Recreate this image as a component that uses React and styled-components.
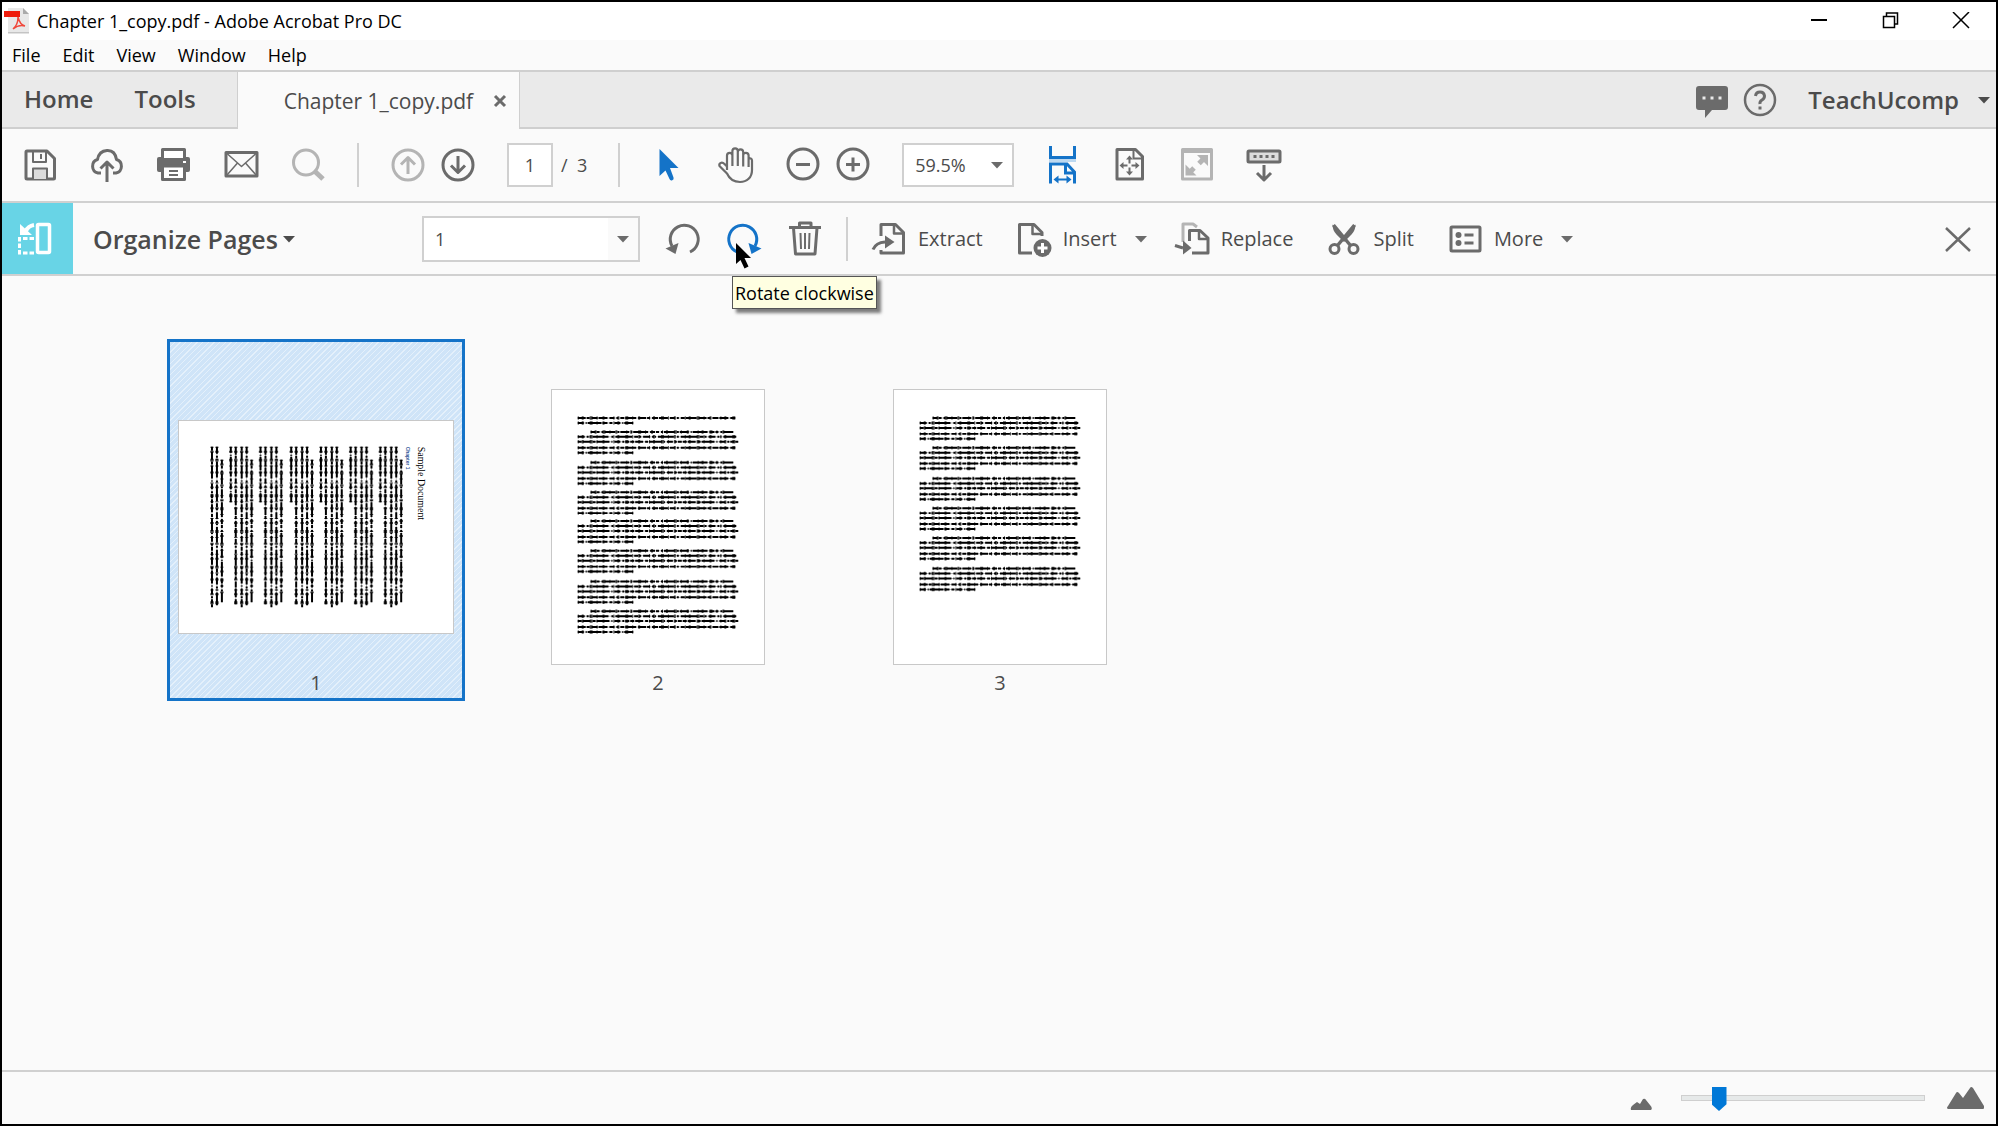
import React, { useState } from "react";
import styled, { createGlobalStyle, css } from "styled-components";

const GlobalStyle = createGlobalStyle`
  * {
    box-sizing: border-box;
  }
  body {
    margin: 0;
    background: #fafafa;
    font-family: "Open Sans", "Noto Sans", sans-serif;
    color: #4b4b4b;
  }
  button,
  input,
  select {
    font-family: inherit;
    color: inherit;
    margin: 0;
  }
  button {
    border: 0;
    padding: 0;
    background: none;
  }
`;

const WindowStyled = styled.div`
  display: flex;
  flex-direction: column;
  min-height: 100vh;
  border: 2px solid #000;
  background: #fafafa;
`;

const TitleBar = styled.header`
  display: flex;
  align-items: center;
  height: 38px;
  padding-left: 2px;
  background: #fff;
  color: #000;
  > h1 {
    flex: 1;
    margin: 0 0 0 7px;
    font-size: 18px;
    font-weight: 400;
    line-height: 24px;
  }
`;

const WindowButton = styled.button`
  display: grid;
  place-items: center;
  width: 71px;
  height: 36px;
`;

const MenuBar = styled.nav`
  display: flex;
  gap: 22px;
  height: 32px;
  padding: 0 10px;
  border-bottom: 2px solid #cfcfcf;
  > button {
    color: #000;
    font-size: 18px;
    line-height: 24px;
  }
`;

const TabBar = styled.div`
  display: flex;
  height: 57px;
  background: #eaeaea;
`;

const barLine = css`
  border-bottom: 2px solid #cfcfcf;
`;

const MainTabs = styled.nav`
  display: flex;
  gap: 41px;
  padding: 0 41px 1px 22px;
  ${barLine}
`;

const BigButton = styled.button`
  display: flex;
  align-items: center;
  gap: ${({ gap }) => gap || "5px"};
  font-size: ${({ size }) => size || "24px"};
  font-weight: 600;
  line-height: 32px;
`;

const FileTab = styled.div`
  display: flex;
  align-items: center;
  gap: 20px;
  padding: 0 12px 0 46px;
  border: solid #cfcfcf;
  border-width: 0 1px;
  background: #fafafa;
  font-size: 21px;
  line-height: 28px;
  > button {
    display: grid;
  }
`;

const Account = styled.div`
  display: flex;
  flex: 1;
  justify-content: flex-end;
  align-items: center;
  gap: 12px;
  padding-right: 6px;
  ${barLine}
  > ${BigButton} {
    margin-left: 18px;
  }
`;

const Toolbar = styled.div`
  display: flex;
  align-items: center;
  gap: 31px;
  height: 74px;
  padding-left: 20px;
  border-bottom: 2px solid #d0d0d0;
`;

const Pair = styled.div`
  display: flex;
  align-items: center;
  gap: ${({ gap }) => gap || "14px"};
`;

const IconButton = styled.button`
  position: relative;
  display: grid;
  color: ${({ tone }) =>
    tone === "active" ? "#1473c8" : tone === "off" ? "#b4b4b4" : "#6b6b6b"};
`;

const Divider = styled.div`
  width: 2px;
  height: 44px;
  background: #d0d0d0;
`;

const PageInput = styled.input`
  width: 46px;
  height: 44px;
  border: 2px solid #d0d0d0;
  background: #fff;
  font-size: 18px;
  text-align: center;
`;

const PageCount = styled.span`
  font-size: 18px;
  line-height: 24px;
  white-space: pre;
`;

const SelectBox = styled.div`
  display: grid;
  align-items: center;
  width: ${({ width }) => width};
  height: ${({ height }) => height};
  border: 2px solid #d0d0d0;
  background: #fff;
  > * {
    grid-area: 1 / 1;
  }
  > select {
    width: 100%;
    height: 100%;
    padding: 0 11px;
    border: 0;
    appearance: none;
    background: none;
    font-size: 18px;
  }
`;

const SelectArrow = styled.span`
  display: grid;
  place-items: center;
  justify-self: end;
  width: 30px;
  height: 100%;
  background: ${({ shaded }) => (shaded ? "#fafafa" : "none")};
  pointer-events: none;
`;

const OrganizeBar = styled.div`
  display: flex;
  align-items: center;
  gap: 25px;
  height: 73px;
  padding-right: 20px;
  border-bottom: 2px solid #d0d0d0;
  > ${Divider} {
    margin: 0 -2px;
  }
`;

const ToolBadge = styled.div`
  display: grid;
  place-items: center;
  align-self: stretch;
  width: 71px;
  padding-right: 5px;
  background: #68d4e6;
`;

const ToolName = styled.div`
  display: flex;
  width: 304px;
  margin-left: -5px;
`;

const Actions = styled.div`
  display: flex;
  flex: 1;
  align-items: center;
  gap: 33px;
`;

const ActionButton = styled.button`
  display: flex;
  align-items: center;
  gap: 11px;
  color: #6b6b6b;
  font-size: 20px;
  line-height: 28px;
  > span {
    padding-top: 1px;
    color: #4b4b4b;
  }
  > span + svg {
    margin: 0 -6px 0 7px;
  }
`;

const MousePointer = styled.svg`
  position: absolute;
  top: 22px;
  left: 10px;
  z-index: 2;
`;

const Tooltip = styled.span`
  position: absolute;
  top: 55px;
  left: 6px;
  z-index: 1;
  padding: 4px 2px 2px;
  border: 1px solid #555;
  background: #ffffe1;
  box-shadow: 4px 4px 3px rgba(0, 0, 0, 0.5);
  color: #000;
  font-size: 18px;
  line-height: 25px;
  white-space: nowrap;
`;

const Pages = styled.main`
  display: flex;
  flex: 1;
  flex-wrap: wrap;
  align-content: flex-start;
  gap: 44px;
  padding: 63px 165px;
`;

const PageCell = styled.figure`
  width: 298px;
  margin: 0;
  padding-top: 47px;
  border: 3px solid ${({ selected }) => (selected ? "#1473c8" : "transparent")};
  background: ${({ selected }) =>
    selected
      ? "repeating-linear-gradient(135deg, #cfe4f8 0 3px, #e4f0fb 3px 4px)"
      : "none"};
  > figcaption {
    padding-top: 3px;
    font-size: 20px;
    line-height: 30px;
    text-align: center;
  }
`;

const PageArea = styled.div`
  display: grid;
  place-items: center;
  height: 276px;
`;

const Sheet = styled.svg`
  display: block;
  border: 1px solid #c8c8c8;
  background: #fff;
`;

const Footer = styled.footer`
  display: flex;
  justify-content: flex-end;
  align-items: center;
  height: 54px;
  padding-right: 12px;
  border-top: 2px solid #d0d0d0;
`;

const SizeSlider = styled.input`
  width: 244px;
  height: 24px;
  margin: 0 22px 0 29px;
  appearance: none;
  background: none;
  &::-webkit-slider-runnable-track {
    height: 6px;
    border: 1px solid #cfcfcf;
    background: #e6e9e9;
  }
  &::-webkit-slider-thumb {
    appearance: none;
    width: 15px;
    height: 24px;
    margin-top: -9px;
    background: #0078d7;
    clip-path: polygon(0 0, 100% 0, 100% 72%, 50% 100%, 0 72%);
  }
`;

const Icon = ({ children }) => (
  <svg
    width="36"
    height="36"
    viewBox="0 0 36 36"
    fill="none"
    stroke="currentColor"
    strokeWidth="3"
    strokeLinejoin="round"
    overflow="visible"
  >
    {children}
  </svg>
);

const Caret = ({ dark }) => (
  <svg width="12" height="8" viewBox="0 0 12 8" fill={dark ? "#4b4b4b" : "#6b6b6b"}>
    <path d="M0 1h12L6 7.5z" />
  </svg>
);

const icons = {
  save: (
    <>
      <path d="M4 5a1 1 0 0 1 1-1h20l7.5 7.5V31a1 1 0 0 1-1 1H5a1 1 0 0 1-1-1z" />
      <path d="M11 4v11h13V4M19 7v5" strokeWidth="2" />
      <path d="M11 32V21.500h14V32" fill="#ddd" strokeWidth="2" />
    </>
  ),
  cloud: (
    <>
      <path d="M12 26H9a7 7 0 0 1-.5-13.500Q10 4 18 3.500T27.500 12.500A7 7 0 0 1 27 26h-3" />
      <path d="M18 35V15M11.500 21.500L18 15l6.500 6.500" />
    </>
  ),
  print: (
    <>
      <path d="M3 10h29a2 2 0 0 1 2 2v11a2 2 0 0 1-2 2H3a2 2 0 0 1-2-2V12a2 2 0 0 1 2-2z" fill="currentColor" stroke="none" />
      <path d="M6.500 11V2.500h22V11" fill="#fff" />
      <path d="M6.500 19v13.500h22V19z" fill="#fff" />
      <path d="M13 24h9M13 28h9" strokeWidth="2" />
      <path d="M27 15h3" stroke="#fff" strokeWidth="2" />
    </>
  ),
  mail: (
    <>
      <path d="M3 5.500h31v23.500H3z" />
      <path d="M4 6.500l14.500 13L33 6.500M4 28l10.500-12M33 28L22.500 16" strokeWidth="1.500" />
    </>
  ),
  search: (
    <>
      <circle cx="16" cy="15.500" r="12.500" />
      <path d="M25 24.500l8 7.500" strokeWidth="5" />
    </>
  ),
  up: (
    <>
      <circle cx="18" cy="18" r="15" />
      <path d="M18 27V11M11 17.500l7-7 7 7" />
    </>
  ),
  down: (
    <>
      <circle cx="18" cy="18" r="15" />
      <path d="M18 9v16M11 18.500l7 7 7-7" />
    </>
  ),
  select: (
    <path d="M8.500 2V29l6-5.500 4 8.500a2 2 0 0 0 4-1.500l-3.500-9.500h8.500z" fill="currentColor" stroke="none" />
  ),
  hand: (
    <path
      d="M9 23V8.500a2.700 2.700 0 0 1 5.400 0V19M14.400 9V4a2.700 2.700 0 0 1 5.400 0V19M19.800 5a2.700 2.700 0 0 1 5.400 0V19.500M25.200 8.500a2.700 2.700 0 0 1 5.400 0V20M30.600 12a2 2 0 0 1 3.400 1.500V23c0 7.500-5 12-12 12-6.500 0-10.500-3-13-8.500L1.500 19c-1-3 2.500-4.500 5-2L9 19.500"
      strokeWidth="2.200"
    />
  ),
  minus: (
    <>
      <circle cx="18" cy="17" r="15" />
      <path d="M11 17.500h14" />
    </>
  ),
  plus: (
    <>
      <circle cx="18" cy="17" r="15" />
      <path d="M11 17.500h14M18 10.500v14" />
    </>
  ),
  fitWidth: (
    <g strokeLinejoin="miter">
      <path d="M5.500-1v11.500h24V-1" />
      <path d="M4 13.500h27" stroke="#bcd8f0" />
      <path d="M5.500 36.500V17h16.500l7.500 8v11.500M20.500 17v9h9" />
      <path d="M11 32.500h13" strokeWidth="2" />
      <path d="M13.500 28.500v8l-5-4zM21.500 28.500v8l5-4z" fill="currentColor" stroke="none" />
    </g>
  ),
  fitPage: (
    <>
      <path d="M5 2.500h18.500l7 7V32H5z" />
      <path d="M21.500 3v8.500H30" strokeWidth="2" />
      <path d="M17.500 11.500v5M17.500 20.500v5M10.500 18.500h5M19.500 18.500h5" strokeWidth="2" />
      <path d="M14 12.500h7l-3.500-4zM14 24.500h7l-3.500 4zM11.500 15v7l-4-3.500zM23.500 15v7l4-3.500z" fill="currentColor" stroke="none" />
    </>
  ),
  fullscreen: (
    <>
      <path d="M3.500 2.500h29V32h-29z" />
      <path d="M4 5h28" strokeWidth="2" />
      <path d="M20 16.500l5-5M15 21l-5 5" strokeWidth="5" />
      <path d="M18 8h11v11zM6.500 17.500v11h11z" fill="currentColor" stroke="none" />
    </>
  ),
  keyboard: (
    <>
      <rect x="2" y="4" width="32" height="11" rx="1" fill="#ddd" />
      <path d="M7.500 9.500h21" strokeDasharray="3 3" />
      <path d="M18 18v15M11 26l7 7 7-7" />
    </>
  ),
  rotateLeft: (
    <>
      <path d="M25 31A14 14 0 1 0 7 25" />
      <path d="M.500 27.500L13.500 22l-3 11z" fill="currentColor" stroke="none" />
    </>
  ),
  rotateRight: (
    <>
      <path d="M11 31A14 14 0 1 1 29 25" />
      <path d="M35.500 27.500L22.500 22l3 11z" fill="currentColor" stroke="none" />
    </>
  ),
  trash: (
    <>
      <path d="M2 6.500h32M12.500 6V2h11.500v4M6.500 7l2 26h19.500l2-26" />
      <path d="M13.500 12l.500 16M18 12v16M22.500 12l-.500 16" strokeWidth="2" />
    </>
  ),
  extract: (
    <>
      <path d="M10 15V3.500h14.500l8 8V32H10v-3" />
      <path d="M23 4v8.500h9" strokeWidth="2.500" />
      <path d="M2 28.500q3-7 12-7.500" />
      <path d="M14 14.500l9.500 6.500-9.500 6.500z" fill="currentColor" stroke="none" />
    </>
  ),
  insert: (
    <>
      <path d="M16 32H3.500V3.500H18l8 8V15" />
      <path d="M16.500 4v9H26" strokeWidth="2.500" />
      <circle cx="26.500" cy="27" r="9" fill="currentColor" stroke="none" />
      <path d="M21.500 27h10M26.500 22v10" stroke="#fff" />
    </>
  ),
  replace: (
    <>
      <path d="M9 21V3h10l4 3" stroke="#b4b4b4" />
      <path d="M15.500 20V9.500H26l8 7.500v15H18" />
      <path d="M25 10v8h9" strokeWidth="2.500" />
      <path d="M1 24.500l8 2.500" />
      <path d="M9 19.500l8.500 7.500-8.500 6.500z" fill="currentColor" stroke="none" />
    </>
  ),
  split: (
    <>
      <circle cx="8.500" cy="28" r="4.500" />
      <circle cx="27.500" cy="28" r="4.500" />
      <path d="M6.500 3.500q0 6 4 10L18 21l7.500-7.500q4-4 4-10L18 15z" fill="currentColor" stroke="none" />
      <path d="M7.500 4L24.500 24.500M28.500 4L11.500 24.500" strokeWidth="3.500" />
    </>
  ),
  more: (
    <>
      <rect x="4" y="6" width="29" height="24" rx="1" />
      <circle cx="11.500" cy="14" r="3" fill="currentColor" stroke="none" />
      <circle cx="11.500" cy="22" r="3" fill="currentColor" stroke="none" />
      <path d="M17.500 14h9M17.500 22h9" />
    </>
  ),
  close: <path d="M6 7l24 23M30 7L6 30" strokeWidth="2.500" />,
  comment: (
    <>
      <path d="M5 4h26a3 3 0 0 1 3 3v18a3 3 0 0 1-3 3H18l-7 8v-8H5a3 3 0 0 1-3-3V7a3 3 0 0 1 3-3z" fill="currentColor" stroke="none" />
      <path d="M8.500 16h3M16.500 16h3M24.500 16h3" stroke="#eaeaea" />
    </>
  ),
  help: (
    <>
      <circle cx="18" cy="18" r="15" strokeWidth="2.500" />
      <path d="M13.500 14q.500-4 4.500-4t4.500 4q0 2.500-2.500 4t-2 4" />
      <path d="M16.500 26h3" />
    </>
  ),
};

const Tool = ({ name, label, tone, children }) => (
  <IconButton type="button" aria-label={label} tone={tone}>
    <Icon>{icons[name]}</Icon>
    {children}
  </IconButton>
);

// greeked text: start, end and word pattern of each line in a paragraph
const lines = [
  [39, 183, "5 1 3 2 2 1 11 2 2 1 9 2 1 1 15 2"],
  [26, 186, "7 2 2 1 1 2 16 3 2 2 17 2 4 1 2 2"],
  [26, 188, "4 1 8 2 3 1 13 2 1 2 6 2 2 1 4 1"],
  [26, 185, "8 1 3 2 6 1 9 2 5 2 2 2 4 1 11 2"],
  [26, 82, "6 2 1 1 14 1 5 2 3 2"],
];
const offsets = [0, 5, 10, 16, 21];

const Paragraph = ({ y, from = 0, to = 5 }) => (
  <g stroke="#000">
    {lines.slice(from, to).map(([start, end, words], i) => (
      <React.Fragment key={start + words}>
        <path
          d={`M${start} ${y + offsets[i]}H${end}`}
          strokeWidth="2"
          strokeDasharray={words}
        />
        <path
          d={`M${start} ${y + offsets[i]}H${end}`}
          strokeWidth="3.500"
          strokeDasharray="1 3 2 6 3 4 1 5 2 9"
          strokeOpacity="0.700"
        />
        <path
          d={`M${start} ${y + offsets[i]}H${end}`}
          strokeWidth="1"
          strokeOpacity="0.300"
        />
      </React.Fragment>
    ))}
  </g>
);

const PageText = ({ page }) => {
  if (page === 1) {
    return (
      <g transform="translate(276 0) rotate(90)">
        <text x="26" y="35" fontFamily="Liberation Serif, serif" fontSize="10" fill="#000">
          Sample Document
        </text>
        <text x="26" y="47" fontFamily="Liberation Sans, sans-serif" fontSize="5" fontWeight="700" fill="#2f5496">
          Chapter 1
        </text>
        {[52, 82, 112, 142, 173, 203].map((y) => (
          <Paragraph key={y} y={y} />
        ))}
        <Paragraph y={233} to={3} />
      </g>
    );
  }
  if (page === 2) {
    return (
      <>
        <Paragraph y={28} from={3} />
        {[42, 73, 103, 132, 162, 193, 223].map((y) => (
          <Paragraph key={y} y={y} />
        ))}
      </>
    );
  }
  return [28, 58, 89, 119, 149, 180].map((y) => <Paragraph key={y} y={y} />);
};

const Thumbnail = ({ page, rotated, selected }) => {
  const width = rotated ? 276 : 214;
  const height = rotated ? 214 : 276;
  return (
    <PageCell selected={selected}>
      <PageArea>
        <Sheet width={width} height={height} viewBox={`0 0 ${width} ${height}`}>
          <PageText page={page} />
        </Sheet>
      </PageArea>
      <figcaption>{page}</figcaption>
    </PageCell>
  );
};

const App = () => {
  const [size, setSize] = useState(13);
  const [pageNumber, setPageNumber] = useState("1");

  return (
    <>
      <GlobalStyle />
      <WindowStyled>
        <TitleBar>
          <svg width="26" height="28" viewBox="0 0 26 28">
            <path d="M4 1h15l6 6v18H4z" fill="#e8e8e8" />
            <path d="M19 1v6h6z" fill="#aaa" />
            <path d="M4 25h21v1.500H4z" fill="#c4c4c4" />
            <path d="M0 4h16v6H0z" fill="#ee1c0c" />
            <path
              d="M14 10q2 8 7 9-6-2-12 3 5-4 5-12"
              fill="none"
              stroke="#f0483c"
              strokeWidth="1.500"
            />
          </svg>
          <h1>Chapter 1_copy.pdf - Adobe Acrobat Pro DC</h1>
          <WindowButton type="button" aria-label="Minimize">
            <svg width="16" height="16" stroke="#000" strokeWidth="2">
              <path d="M0 7h16" />
            </svg>
          </WindowButton>
          <WindowButton type="button" aria-label="Restore">
            <svg width="18" height="18" fill="none" stroke="#000" strokeWidth="1.500">
              <path d="M2.500 4.500h11v11h-11zM5.500 4V1h11v11h-3" />
            </svg>
          </WindowButton>
          <WindowButton type="button" aria-label="Close">
            <svg width="18" height="18" stroke="#000" strokeWidth="1.500">
              <path d="M1 0l16 16M17 0L1 16" />
            </svg>
          </WindowButton>
        </TitleBar>

        <MenuBar>
          <button type="button">File</button>
          <button type="button">Edit</button>
          <button type="button">View</button>
          <button type="button">Window</button>
          <button type="button">Help</button>
        </MenuBar>

        <TabBar>
          <MainTabs>
            <BigButton type="button">Home</BigButton>
            <BigButton type="button">Tools</BigButton>
          </MainTabs>
          <FileTab>
            <span>Chapter 1_copy.pdf</span>
            <button type="button" aria-label="Close tab">
              <svg width="14" height="14" stroke="#6b6b6b" strokeWidth="3">
                <path d="M2 2l10 10M12 2L2 12" />
              </svg>
            </button>
          </FileTab>
          <Account>
            <Tool name="comment" label="Comments" />
            <Tool name="help" label="Help" />
            <BigButton type="button" gap="19px">
              TeachUcomp
              <Caret dark />
            </BigButton>
          </Account>
        </TabBar>

        <Toolbar>
          <Tool name="save" label="Save" />
          <Tool name="cloud" label="Upload" />
          <Tool name="print" label="Print" />
          <Tool name="mail" label="Email" />
          <Tool name="search" label="Find" tone="off" />
          <Divider />
          <Pair>
            <Tool name="up" label="Previous page" tone="off" />
            <Tool name="down" label="Next page" />
          </Pair>
          <Pair gap="8px">
            <PageInput
              aria-label="Page number"
              value={pageNumber}
              onChange={(e) => setPageNumber(e.target.value)}
            />
            <PageCount>/  3</PageCount>
          </Pair>
          <Divider />
          <Tool name="select" label="Select" tone="active" />
          <Tool name="hand" label="Hand" />
          <Pair>
            <Tool name="minus" label="Zoom out" />
            <Tool name="plus" label="Zoom in" />
          </Pair>
          <SelectBox width="112px" height="44px">
            <select aria-label="Zoom level">
              <option>59.5%</option>
            </select>
            <SelectArrow>
              <Caret />
            </SelectArrow>
          </SelectBox>
          <Tool name="fitWidth" label="Fit width" tone="active" />
          <Tool name="fitPage" label="Fit page" />
          <Tool name="fullscreen" label="Full screen" tone="off" />
          <Tool name="keyboard" label="Read mode" />
        </Toolbar>

        <OrganizeBar>
          <ToolBadge>
            <svg width="34" height="34" viewBox="0 0 34 34" fill="none" stroke="#fff">
              <rect x="19.500" y="2.500" width="12" height="28" rx="1" strokeWidth="3.500" />
              <path d="M16 16.500H1.500v14.500H17" strokeWidth="3" strokeDasharray="4.500 2" />
              <path d="M16 3Q10 4 8 9" strokeWidth="4" />
              <path d="M2 2v11h12z" fill="#fff" stroke="none" />
            </svg>
          </ToolBadge>
          <ToolName>
            <BigButton type="button" size="25px">
              Organize Pages
              <Caret dark />
            </BigButton>
          </ToolName>
          <SelectBox width="218px" height="46px">
            <select aria-label="Page range">
              <option>1</option>
            </select>
            <SelectArrow shaded>
              <Caret />
            </SelectArrow>
          </SelectBox>
          <Tool name="rotateLeft" label="Rotate counterclockwise" />
          <Tool name="rotateRight" label="Rotate clockwise" tone="active">
            <MousePointer width="16" height="26" viewBox="0 0 16 26">
              <path d="M0 0v21l4.500-4 4 8.500 4-2-4-8.500H15z" fill="#000" />
            </MousePointer>
            <Tooltip role="tooltip">Rotate clockwise</Tooltip>
          </Tool>
          <Tool name="trash" label="Delete" />
          <Divider />
          <Actions>
            <ActionButton type="button">
              <Icon>{icons.extract}</Icon>
              <span>Extract</span>
            </ActionButton>
            <ActionButton type="button">
              <Icon>{icons.insert}</Icon>
              <span>Insert</span>
              <Caret />
            </ActionButton>
            <ActionButton type="button">
              <Icon>{icons.replace}</Icon>
              <span>Replace</span>
            </ActionButton>
            <ActionButton type="button">
              <Icon>{icons.split}</Icon>
              <span>Split</span>
            </ActionButton>
            <ActionButton type="button">
              <Icon>{icons.more}</Icon>
              <span>More</span>
              <Caret />
            </ActionButton>
          </Actions>
          <Tool name="close" label="Close toolbar" />
        </OrganizeBar>

        <Pages>
          <Thumbnail page={1} rotated selected />
          <Thumbnail page={2} />
          <Thumbnail page={3} />
        </Pages>

        <Footer>
          <svg width="22" height="24" viewBox="0 0 22 24" fill="#6b6b6b">
            <path d="M1 24q-1-3 2-5l4-3 3 2 3-5q2-1 3 1l4 5q3 3 1 5z" />
          </svg>
          <SizeSlider
            type="range"
            aria-label="Thumbnail size"
            value={size}
            onChange={(e) => setSize(e.target.value)}
          />
          <svg width="37" height="22" viewBox="0 0 37 22" fill="#6b6b6b">
            <path d="M1 22q-2-1 0-3L9 6q1-2 3 0l4 5 7-10q1-2 3 0l11 18q1 2-1 3z" />
          </svg>
        </Footer>
      </WindowStyled>
    </>
  );
};

export default App;
